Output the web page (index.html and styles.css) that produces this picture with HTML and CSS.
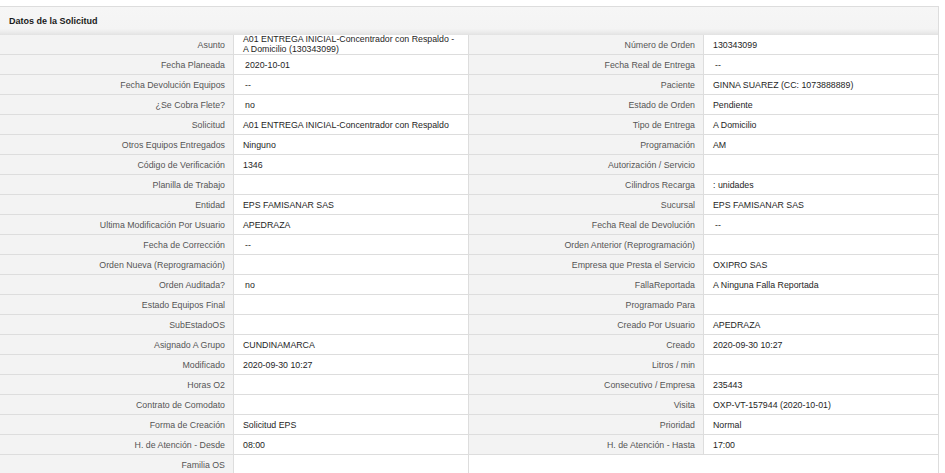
FILE: index.html
```html
<!DOCTYPE html>
<html lang="es">
<head>
<meta charset="utf-8">
<title>Datos de la Solicitud</title>
<link rel="stylesheet" href="styles.css">
</head>
<body>
<div class="panel">
  <div class="panel-head">Datos de la Solicitud</div>
  <div class="grid">
    <div class="lbl">Asunto</div><div class="val two">A01 ENTREGA INICIAL-Concentrador con Respaldo -<br>A Domicilio (130343099)</div>
    <div class="lbl">Número de Orden</div><div class="val">130343099</div>

    <div class="lbl">Fecha Planeada</div><div class="val sp">2020-10-01</div>
    <div class="lbl">Fecha Real de Entrega</div><div class="val sp">--</div>

    <div class="lbl">Fecha Devolución Equipos</div><div class="val sp">--</div>
    <div class="lbl">Paciente</div><div class="val">GINNA SUAREZ (CC: 1073888889)</div>

    <div class="lbl">¿Se Cobra Flete?</div><div class="val sp">no</div>
    <div class="lbl">Estado de Orden</div><div class="val">Pendiente</div>

    <div class="lbl">Solicitud</div><div class="val">A01 ENTREGA INICIAL-Concentrador con Respaldo</div>
    <div class="lbl">Tipo de Entrega</div><div class="val">A Domicilio</div>

    <div class="lbl">Otros Equipos Entregados</div><div class="val">Ninguno</div>
    <div class="lbl">Programación</div><div class="val">AM</div>

    <div class="lbl">Código de Verificación</div><div class="val">1346</div>
    <div class="lbl">Autorización / Servicio</div><div class="val"></div>

    <div class="lbl">Planilla de Trabajo</div><div class="val"></div>
    <div class="lbl">Cilindros Recarga</div><div class="val">: unidades</div>

    <div class="lbl">Entidad</div><div class="val">EPS FAMISANAR SAS</div>
    <div class="lbl">Sucursal</div><div class="val">EPS FAMISANAR SAS</div>

    <div class="lbl">Ultima Modificación Por Usuario</div><div class="val">APEDRAZA</div>
    <div class="lbl">Fecha Real de Devolución</div><div class="val sp">--</div>

    <div class="lbl">Fecha de Corrección</div><div class="val sp">--</div>
    <div class="lbl">Orden Anterior (Reprogramación)</div><div class="val"></div>

    <div class="lbl">Orden Nueva (Reprogramación)</div><div class="val"></div>
    <div class="lbl">Empresa que Presta el Servicio</div><div class="val">OXIPRO SAS</div>

    <div class="lbl">Orden Auditada?</div><div class="val sp">no</div>
    <div class="lbl">FallaReportada</div><div class="val">A Ninguna Falla Reportada</div>

    <div class="lbl">Estado Equipos Final</div><div class="val"></div>
    <div class="lbl">Programado Para</div><div class="val"></div>

    <div class="lbl">SubEstadoOS</div><div class="val"></div>
    <div class="lbl">Creado Por Usuario</div><div class="val">APEDRAZA</div>

    <div class="lbl">Asignado A Grupo</div><div class="val">CUNDINAMARCA</div>
    <div class="lbl">Creado</div><div class="val">2020-09-30 10:27</div>

    <div class="lbl">Modificado</div><div class="val">2020-09-30 10:27</div>
    <div class="lbl">Litros / min</div><div class="val"></div>

    <div class="lbl">Horas O2</div><div class="val"></div>
    <div class="lbl">Consecutivo / Empresa</div><div class="val">235443</div>

    <div class="lbl">Contrato de Comodato</div><div class="val"></div>
    <div class="lbl">Visita</div><div class="val">OXP-VT-157944 (2020-10-01)</div>

    <div class="lbl">Forma de Creación</div><div class="val">Solicitud EPS</div>
    <div class="lbl">Prioridad</div><div class="val">Normal</div>

    <div class="lbl">H. de Atención - Desde</div><div class="val">08:00</div>
    <div class="lbl">H. de Atención - Hasta</div><div class="val">17:00</div>

    <div class="lbl last">Familia OS</div><div class="val last"></div>
  </div>
</div>
</body>
</html>
```
FILE: styles.css
```css
html, body {
  margin: 0;
  padding: 0;
  background: #ffffff;
}

body {
  font-family: "Liberation Sans", Arial, sans-serif;
  color: #222222;
  padding-top: 6px;
}

.panel {
  width: 939px;
  box-sizing: border-box;
  border-top: 1px solid #dddddd;
  border-right: 1px solid #dddddd;
}

.panel-head {
  height: 28px;
  box-sizing: border-box;
  padding: 0 9px;
  display: flex;
  align-items: center;
  font-size: 9px;
  font-weight: bold;
  color: #1a1a1a;
  background: linear-gradient(to bottom, #f6f6f6 0%, #f4f4f4 78%, #ebebeb 90%, #e2e2e2 100%);
}

.grid {
  display: grid;
  grid-template-columns: 234px 235px 235px 234px;
  font-size: 8.8px;
  line-height: 10px;
}

.lbl, .val {
  height: 20px;
  box-sizing: border-box;
  border-bottom: 1px solid #dddddd;
  border-right: 1px solid #dddddd;
  display: flex;
  align-items: center;
  white-space: nowrap;
  overflow: hidden;
}

.lbl {
  justify-content: flex-end;
  padding-right: 8px;
  background: #f3f3f3;
  color: #555555;
}

.val {
  padding-left: 9px;
  background: #ffffff;
  color: #1e1e1e;
}

.val.sp {
  padding-left: 11px;
}

.val.two {
  white-space: normal;
  line-height: 9.5px;
}

.grid > div:nth-child(4n) {
  border-right: none;
}

.lbl.last {
  border-bottom: none;
}

.val.last {
  border-bottom: none;
  border-right: 1px solid #dddddd;
}
```
